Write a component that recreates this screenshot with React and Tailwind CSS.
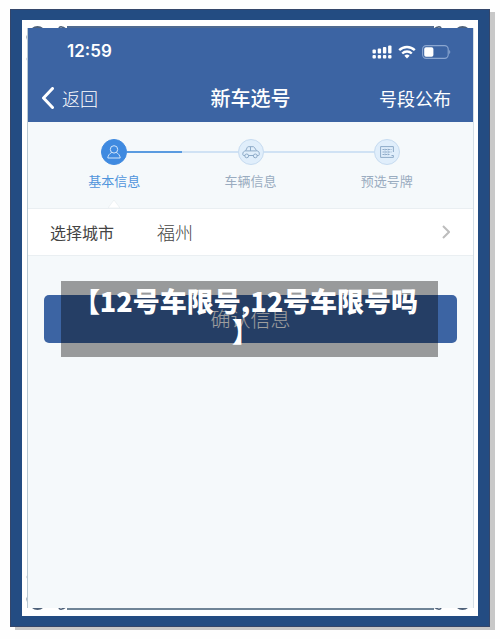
import React from "react";

function Corner({ className }) {
  return (
    <svg
      aria-hidden="true"
      viewBox="0 0 46 46"
      className={`absolute h-[46px] w-[46px] ${className}`}
      fill="none"
      stroke="#4d6078"
      strokeWidth="2"
    >
      <path d="M11 8.500c2-2 7-2 9 0" />
      <path d="M37 9c0-3 4-3 4 0M41 7l3 2" strokeWidth="1.5" />
      <path d="M7 13c-2 2-2 6 0 8" />
      <path d="M7 37c-2 0-2 4 0 4" strokeWidth="1.5" />
    </svg>
  );
}

function SignalIcon() {
  return (
    <svg aria-hidden="true" viewBox="0 0 20 14" className="h-[14px] w-5" fill="#fff">
      <rect x="0.5" y="4.5" width="3.400" height="4" rx="1" />
      <rect x="5.7" y="3.5" width="3.400" height="5" rx="1" />
      <rect x="10.9" y="2" width="3.400" height="6.5" rx="1" />
      <rect x="16.1" y="0.5" width="3.400" height="8" rx="1" />
      <rect x="0.5" y="10" width="3.400" height="3.400" rx="1" />
      <rect x="5.7" y="10" width="3.400" height="3.400" rx="1" />
      <rect x="10.9" y="10" width="3.400" height="3.400" rx="1" />
      <rect x="16.1" y="10" width="3.400" height="3.400" rx="1" />
    </svg>
  );
}

function WifiIcon() {
  return (
    <svg aria-hidden="true" viewBox="0 0 18 14" className="h-[14px] w-[18px]" fill="none" stroke="#fff" strokeWidth="2.4">
      <path d="M1.2 5.2a11.2 11.2 0 0 1 15.6 0" />
      <path d="M4.2 8.5a6.9 6.9 0 0 1 9.6 0" />
      <path d="M9 13.4l-2.6-2.7a3.8 3.8 0 0 1 5.2 0z" fill="#fff" stroke="none" />
    </svg>
  );
}

function BatteryIcon() {
  return (
    <svg aria-hidden="true" viewBox="0 0 29 14" className="h-[14px] w-[29px]">
      <rect x="0.6" y="0.6" width="25.6" height="12.8" rx="3.6" fill="none" stroke="#8ba6d0" strokeWidth="1.1" />
      <rect x="2.2" y="2.2" width="9.2" height="9.6" rx="1.8" fill="#fff" />
      <path d="M27.2 5v4c1.4-.5 1.4-3.500 0-4z" fill="#8ba6d0" />
    </svg>
  );
}

function PersonIcon() {
  return (
    <svg aria-hidden="true" viewBox="0 0 14 14" className="h-[14px] w-[14px]" fill="none" stroke="#d3e6fa" strokeWidth="1">
      <circle cx="7" cy="4.400" r="3.700" />
      <path d="M4.800 7.400C2.600 8.600 1 10.400.8 13h12.400c-.2-2.600-1.800-4.400-4-5.600" strokeLinejoin="round" />
    </svg>
  );
}

function CarIcon() {
  return (
    <svg aria-hidden="true" viewBox="0 0 18 14" className="h-[14px] w-[18px]" fill="none" stroke="#8eabc8" strokeWidth="1">
      <path d="M3 10.500H1.600C.9 10.500.8 9.900.8 9.200c0-2 .7-2.900 2.800-3.300L5.300 2.400c.2-.5.5-.7 1-.7h4.900c.5 0 .8.2 1.100.6l2.300 3.400c2 .4 2.700 1.300 2.700 3.200 0 1-.1 1.600-.9 1.600H15M6.400 10.500h5.200M3.600 5.900h11M8.500 1.700v4.200" />
      <circle cx="4.700" cy="10.900" r="1.900" />
      <circle cx="13.300" cy="10.900" r="1.900" />
    </svg>
  );
}

function PlateIcon() {
  return (
    <svg aria-hidden="true" viewBox="0 0 14 12" className="h-3 w-[14px]" fill="none" stroke="#8eabc8" strokeWidth="1">
      <path d="M13.400 6V.6H.6v10.800h12.800V9.500M11.500 9.500h1.900" />
      <path d="M2.500 3.500h9M2.500 6h9M2.500 8.500h7" strokeDasharray="2 .7" />
      <path d="M5 2.500v7M8 2.500v7" strokeWidth=".5" />
    </svg>
  );
}

const steps = [
  {
    label: "基本信息",
    icon: <PersonIcon />,
    text: "text-[#4f94dc]",
    circle: "border-[#3f8ae0] bg-[#3f8ae0]",
    before: "bg-transparent",
    after: "bg-[#5a9be0]",
  },
  {
    label: "车辆信息",
    icon: <CarIcon />,
    text: "text-[#9aacc0]",
    circle: "border-[#c6dbf0] bg-[#e0eefb]",
    before: "bg-[#d0e2f4]",
    after: "bg-[#d0e2f4]",
  },
  {
    label: "预选号牌",
    icon: <PlateIcon />,
    text: "text-[#9aacc0]",
    circle: "border-[#c6dbf0] bg-[#e0eefb]",
    before: "bg-[#d0e2f4]",
    after: "bg-transparent",
  },
];

function Step({ step, active }) {
  return (
    <li className={`flex flex-1 flex-col items-center ${step.text}`} aria-current={active ? "step" : undefined}>
      <div className="flex w-full items-center">
        <span className={`h-[2px] flex-1 ${step.before}`} />
        <span className={`flex h-[26px] w-[26px] items-center justify-center rounded-full border ${step.circle}`}>
          {step.icon}
        </span>
        <span className={`h-[2px] flex-1 ${step.after}`} />
      </div>
      <span className="mt-[6px] text-[13px] leading-5">{step.label}</span>
      {active && (
        <svg aria-hidden="true" viewBox="0 0 12 8" className="mt-auto h-2 w-3">
          <path d="M0 8L6 0l6 8z" fill="#fff" stroke="#e6ebee" strokeWidth=".6" />
        </svg>
      )}
    </li>
  );
}

export default function App() {
  return (
    <div className="flex min-h-screen flex-col bg-[#fefefe] px-[10px] pt-[9px] pb-3 font-['Noto_Sans_CJK_SC',sans-serif]">
      <div className="relative flex flex-1 flex-col border-x-[12px] border-y-[11px] border-[#234c82] bg-white py-[6px] pr-[5px] pl-[6px] shadow-[5px_3px_0_#c8c8c8] outline-1 -outline-offset-1 outline-[#34466a]">
        <Corner className="top-0 left-0" />
        <Corner className="top-0 right-0 -scale-x-100" />
        <Corner className="bottom-0 left-0 -scale-y-100" />
        <Corner className="right-0 bottom-0 -scale-100" />

        <div className="mx-[39px] h-[2px] bg-[#4f6a90]" />
        <main className="relative flex flex-1 flex-col bg-[#f5f9fb] shadow-[-1px_0_0_#b9c9d3,1px_0_0_#d5dfe6]">
          <header className="bg-[#3c64a3] text-white">
            <div className="flex h-12 items-center justify-between pr-[22px] pl-[39px]">
              <time className="font-['Inter',sans-serif] text-[17px] font-semibold">12:59</time>
              <div className="flex items-center gap-[6px]">
                <SignalIcon />
                <WifiIcon />
                <BatteryIcon />
              </div>
            </div>
            <nav className="grid h-[46px] grid-cols-3 items-center pr-[22px] pb-[2px] pl-[13px] leading-6">
              <button type="button" className="flex items-center gap-2 text-[18px] font-light">
                <svg aria-hidden="true" viewBox="0 0 13 22" className="h-[22px] w-[13px]" fill="none" stroke="#fff" strokeWidth="3">
                  <path d="M11.500 1.500L2.500 11l9 9.500" strokeLinecap="round" strokeLinejoin="round" />
                </svg>
                返回
              </button>
              <h1 className="pl-[9px] text-center text-[20px] font-medium">新车选号</h1>
              <a href="#segments" className="text-right text-[18px] font-normal">号段公布</a>
            </nav>
          </header>

          <ol className="flex h-[86px] px-[18px] pt-[17px]">
            {steps.map((step, i) => (
              <Step key={step.label} step={step} active={i === 0} />
            ))}
          </ol>

          <button
            type="button"
            className="flex h-12 items-center border-y border-[#eaeff2] bg-white pr-[23px] pb-px pl-[22px] text-left leading-6"
          >
            <span className="w-[107px] text-[16px] text-[#444]">选择城市</span>
            <span className="flex-1 text-[18px] font-light text-[#444]">福州</span>
            <svg aria-hidden="true" viewBox="0 0 8 14" className="h-[14px] w-2" fill="none" stroke="#bdbdbd" strokeWidth="2">
              <path d="M1 1l6 6-6 6" />
            </svg>
          </button>

          <div className="relative mt-[39px] px-4">
            <button
              type="button"
              className="h-12 w-full rounded-[5px] bg-[#3c64a3] text-[20px] leading-6 font-light text-white"
            >
              确认信息
            </button>
            <div className="absolute -top-[14px] right-[35px] left-[33px] h-19 bg-black/38 pt-[5px] pr-2 text-center text-[27px] leading-[30px] font-black whitespace-nowrap text-white">
              【12号车限号,12号车限号吗
              <br />】
            </div>
          </div>
        </main>
        <div className="mx-[39px] h-[2px] bg-[#6f8496]" />
      </div>
    </div>
  );
}
